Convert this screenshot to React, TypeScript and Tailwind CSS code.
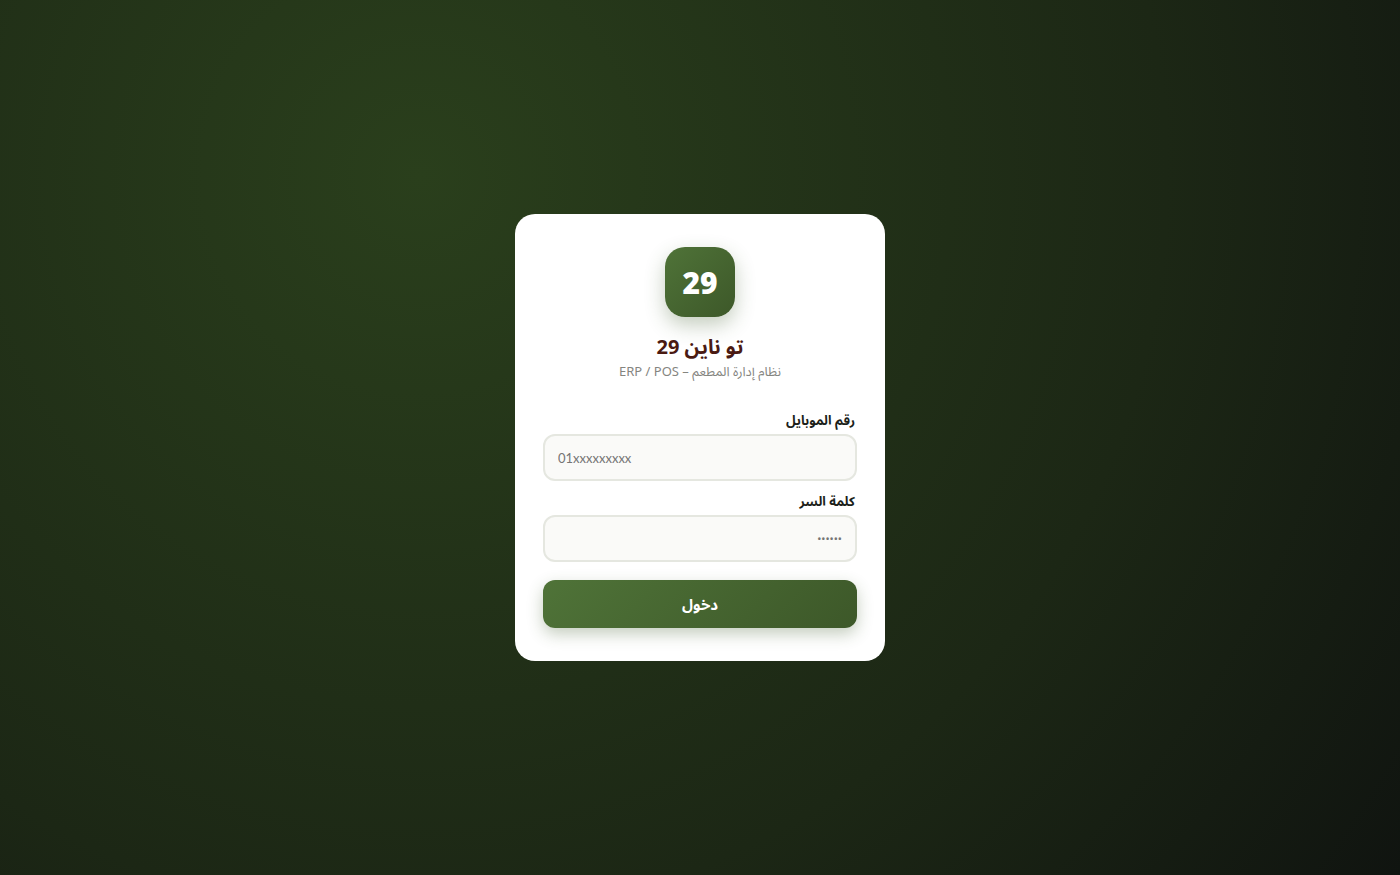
import { useState } from 'react';
import type { FormEvent } from 'react';

export default function App() {
  const [phone, setPhone] = useState('');
  const [password, setPassword] = useState('');

  const submit = (event: FormEvent) => event.preventDefault();

  const label = 'mb-1.5 block px-0.5 text-[13px] leading-4 font-bold text-[#1c1f1a]';
  const field =
    'block h-[47px] w-full rounded-xl border-2 border-[#e5e7e0] bg-[#fafaf8] px-[13px] text-[#1c1f1a] outline-none placeholder:text-[#757575] focus:border-[#4f7338]';

  return (
    <main
      dir="rtl"
      lang="ar"
      className="flex min-h-screen items-center justify-center bg-[radial-gradient(circle_at_30%_20%,#2a3f1c_0%,#1c2715_62%,#101410_100%)] p-4 font-['Noto_Sans','Noto_Sans_Arabic','DejaVu_Sans',sans-serif]"
    >
      <section className="w-full max-w-[370px] rounded-[20px] bg-white px-7 py-[33px]">
        <header className="flex flex-col items-center text-center">
          <div className="flex size-[70px] items-center justify-center rounded-[20px] bg-linear-135 from-[#4f7338] to-[#3d5829] font-['Open_Sans','Noto_Sans',sans-serif] text-[30px] font-extrabold text-white shadow-[0_8px_20px_rgba(61,88,41,0.3)]">
            29
          </div>
          <h1 className="mt-3.5 text-[20px] leading-8 font-bold text-[#4a1a12]">تو ناين 29</h1>
          <p className="text-[13px] leading-4 text-[#85857f]">نظام إدارة المطعم – ERP / POS</p>
        </header>

        <form onSubmit={submit} className="mt-[33px]">
          <label htmlFor="phone" className={label}>
            رقم الموبايل
          </label>
          <input
            id="phone"
            type="tel"
            dir="ltr"
            value={phone}
            onChange={(event) => setPhone(event.target.value)}
            placeholder="01xxxxxxxxx"
            className={`${field} font-['Lato','Noto_Sans',sans-serif] text-[13px]`}
          />

          <label htmlFor="password" className={`${label} mt-3`}>
            كلمة السر
          </label>
          <input
            id="password"
            type="password"
            value={password}
            onChange={(event) => setPassword(event.target.value)}
            placeholder="••••••"
            className={`${field} text-[11px]`}
          />

          <button
            type="submit"
            className="mt-[18px] h-12 w-full cursor-pointer rounded-xl bg-linear-135 from-[#4f7338] to-[#3d5829] text-[15px] font-bold text-white shadow-[0_6px_16px_rgba(61,88,41,0.3)]"
          >
            دخول
          </button>
        </form>
      </section>
    </main>
  );
}
